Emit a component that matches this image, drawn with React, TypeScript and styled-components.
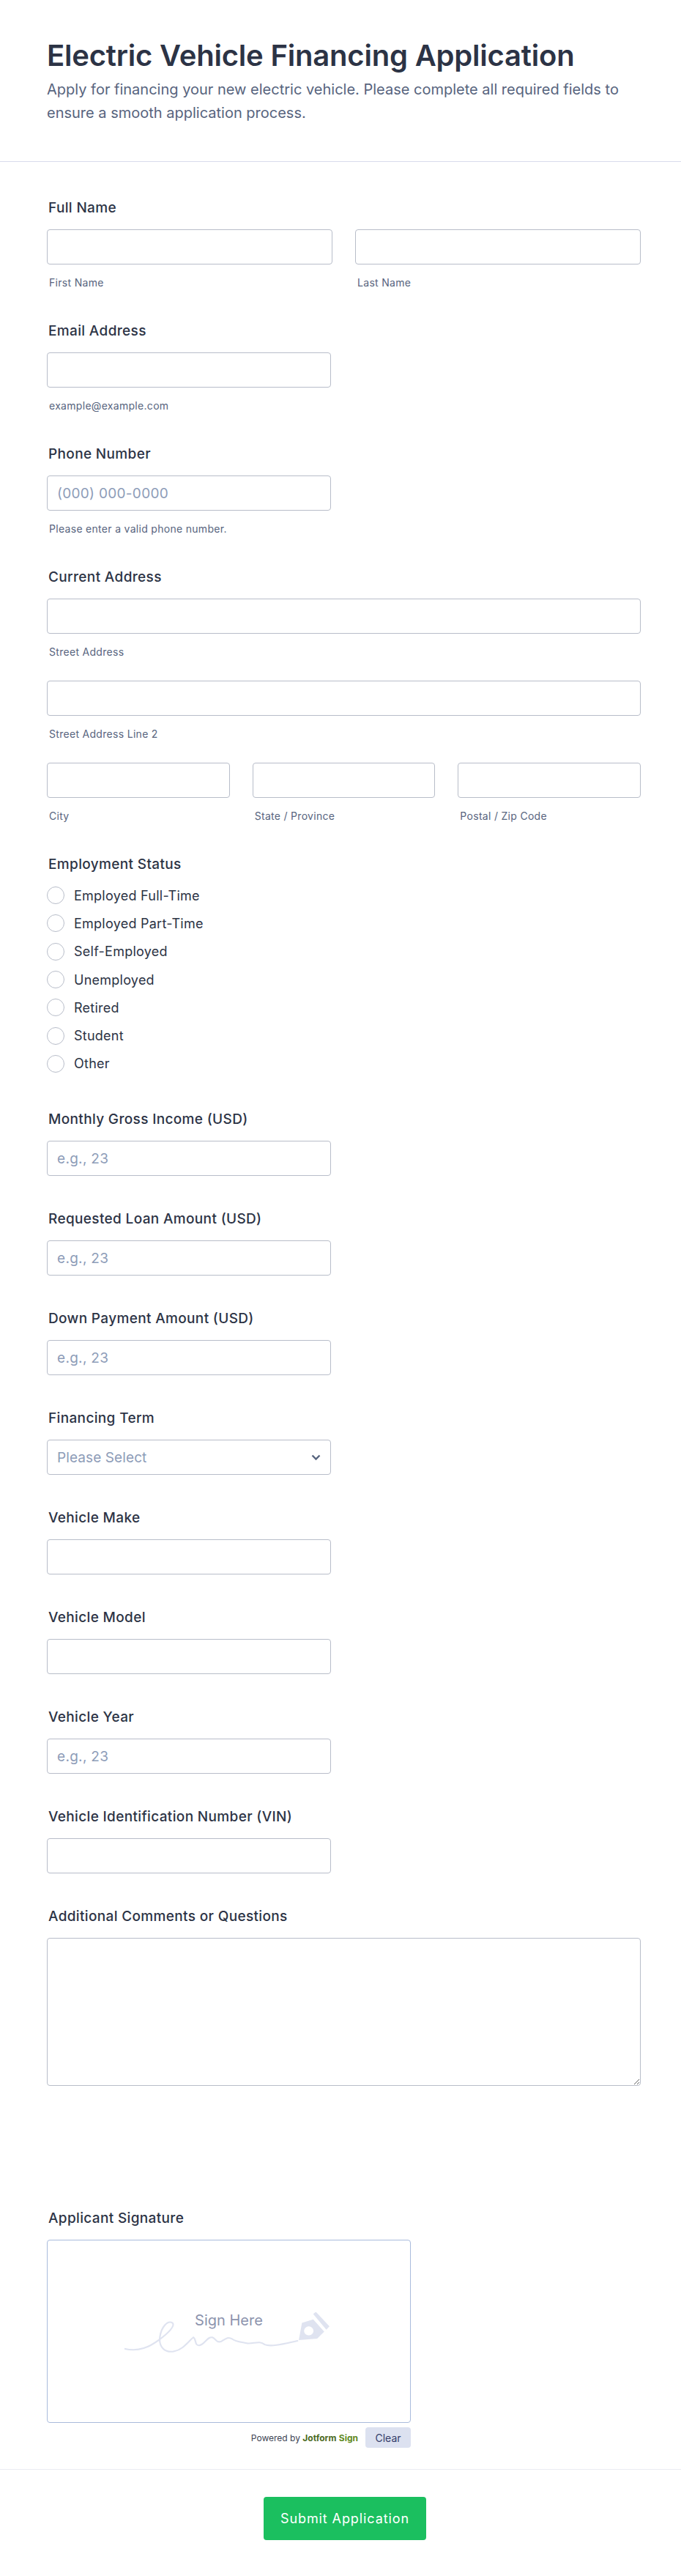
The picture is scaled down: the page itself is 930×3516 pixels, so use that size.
import styled, { createGlobalStyle } from "styled-components";

const GlobalStyle = createGlobalStyle`
  * { box-sizing: border-box; }
  body {
    margin: 0;
    background: #fff;
    font-family: Inter, "Liberation Sans", sans-serif;
    color: #2c3345;
  }
`;

const Page = styled.form`
  width: 930px;
  height: 3516px;
`;

const Header = styled.header`
  padding: 52px 64px 0;
  height: 221px;
  border-bottom: 1px solid #d8dcec;
`;

const Title = styled.h1`
  margin: 0;
  font-size: 40px;
  line-height: 48px;
  font-weight: 600;
  letter-spacing: -0.2px;
  color: #2c3345;
`;

const Subtitle = styled.p`
  margin: 6px 0 0;
  font-size: 20px;
  line-height: 32px;
  color: #57647e;
`;

const Fields = styled.div`
  padding: 51px 55px 0 64px;
`;

const Field = styled.div<{ $gap?: number }>`
  margin-bottom: ${(p) => p.$gap ?? 47}px;
`;

const Label = styled.label`
  display: block;
  padding-left: 2px;
  margin-bottom: 17px;
  font-size: 19px;
  line-height: 24px;
  font-weight: 500;
  letter-spacing: 0.35px;
  color: #2c3345;
`;

const Row = styled.div<{ $cols: number; $gap: number }>`
  display: grid;
  grid-template-columns: repeat(${(p) => p.$cols}, 1fr);
  column-gap: ${(p) => p.$gap}px;
`;

const Input = styled.input<{ $short?: boolean }>`
  display: block;
  width: ${(p) => (p.$short ? "388px" : "100%")};
  height: 48px;
  padding: 0 13px;
  border: 1px solid #b8bdc9;
  border-radius: 4px;
  background: #fff;
  font: 400 19px Inter, sans-serif;
  letter-spacing: 0.3px;
  color: #2c3345;
  outline: none;
  &::placeholder {
    color: #8d9cb8;
    opacity: 1;
  }
`;

const SelectWrap = styled.div`
  position: relative;
  width: 388px;
`;

const Select = styled.select`
  display: block;
  width: 100%;
  height: 48px;
  padding: 0 13px;
  border: 1px solid #b8bdc9;
  border-radius: 4px;
  background: #fff;
  font: 400 19px Inter, sans-serif;
  letter-spacing: 0.1px;
  color: #8d9cb8;
  appearance: none;
  outline: none;
`;

const Chevron = styled.svg`
  position: absolute;
  top: 20px;
  right: 14px;
  width: 13px;
  height: 9px;
`;

const Sub = styled.div<{ $bottom?: number }>`
  margin-top: 17px;
  margin-bottom: ${(p) => p.$bottom ?? 0}px;
  padding-left: 3px;
  font-size: 14px;
  line-height: 15px;
  letter-spacing: 0.3px;
  color: #57647e;
`;

const Radios = styled.div`
  display: flex;
  flex-direction: column;
  margin-top: -6px;
`;

const RadioRow = styled.label`
  display: flex;
  align-items: center;
  gap: 13px;
  height: 38.3px;
  font-size: 18px;
  letter-spacing: 0.25px;
  color: #2c3345;
`;

const RadioDot = styled.input`
  appearance: none;
  width: 24px;
  height: 24px;
  margin: 0;
  border: 1px solid #b8bdc9;
  border-radius: 50%;
  background: #fff;
`;

const Comments = styled.textarea`
  display: block;
  width: 100%;
  height: 202px;
  border: 1px solid #b8bdc9;
  border-radius: 4px;
  background: #fff;
  outline: none;
`;

const SignatureWrap = styled.div`
  width: 497px;
`;

const SignatureBox = styled.div`
  position: relative;
  height: 250px;
  border: 1px solid #a9bbdc;
  border-radius: 4px;
  background: #fff;
`;

const SignHere = styled.span`
  position: absolute;
  top: 96px;
  left: 0;
  right: 0;
  text-align: center;
  font-size: 20px;
  line-height: 26px;
  color: #8d94ae;
`;

const Scribble = styled.svg`
  position: absolute;
  top: 98px;
  left: 105px;
  width: 281px;
  height: 56px;
`;

const SignatureFooter = styled.div`
  display: flex;
  justify-content: flex-end;
  align-items: center;
  gap: 10px;
  margin-top: 6px;
`;

const Powered = styled.span`
  font-size: 12px;
  color: #3d4454;
  b {
    font-weight: 700;
    color: #4c6b1f;
  }
  em {
    font-style: normal;
    font-weight: 700;
    color: #5f8a22;
  }
`;

const ClearButton = styled.button`
  width: 62px;
  height: 28px;
  padding: 0;
  border: none;
  border-radius: 4px;
  background: #dce1f0;
  font: 400 14px Inter, sans-serif;
  color: #343c6a;
`;

const Footer = styled.footer`
  display: flex;
  justify-content: center;
  margin-top: 29px;
  padding: 37px 0 0 12px;
  border-top: 1px solid #eaebf2;
`;

const Submit = styled.button`
  width: 222px;
  height: 59px;
  border: none;
  border-radius: 4px;
  background: #1bbf5f;
  font: 400 18px Inter, sans-serif;
  letter-spacing: 0.9px;
  color: #fff;
`;

const employment = [
  "Employed Full-Time",
  "Employed Part-Time",
  "Self-Employed",
  "Unemployed",
  "Retired",
  "Student",
  "Other",
];

const App = () => {
  return (
    <Page>
      <GlobalStyle />
      <Header>
        <Title>Electric Vehicle Financing Application</Title>
        <Subtitle>
          Apply for financing your new electric vehicle. Please complete all required fields to ensure a smooth
          application process.
        </Subtitle>
      </Header>
      <Fields>
        <Field>
          <Label>Full Name</Label>
          <Row $cols={2} $gap={31}>
            <div>
              <Input />
              <Sub>First Name</Sub>
            </div>
            <div>
              <Input />
              <Sub>Last Name</Sub>
            </div>
          </Row>
        </Field>
        <Field>
          <Label>Email Address</Label>
          <Input $short />
          <Sub>example@example.com</Sub>
        </Field>
        <Field>
          <Label>Phone Number</Label>
          <Input $short placeholder="(000) 000-0000" />
          <Sub>Please enter a valid phone number.</Sub>
        </Field>
        <Field>
          <Label>Current Address</Label>
          <Input />
          <Sub $bottom={32}>Street Address</Sub>
          <Input />
          <Sub $bottom={32}>Street Address Line 2</Sub>
          <Row $cols={3} $gap={31}>
            <div>
              <Input />
              <Sub>City</Sub>
            </div>
            <div>
              <Input />
              <Sub>State / Province</Sub>
            </div>
            <div>
              <Input />
              <Sub>Postal / Zip Code</Sub>
            </div>
          </Row>
        </Field>
        <Field $gap={45}>
          <Label>Employment Status</Label>
          <Radios>
            {employment.map((item) => (
              <RadioRow key={item}>
                <RadioDot type="radio" name="employment" />
                {item}
              </RadioRow>
            ))}
          </Radios>
        </Field>
        <Field>
          <Label>Monthly Gross Income (USD)</Label>
          <Input $short placeholder="e.g., 23" />
        </Field>
        <Field>
          <Label>Requested Loan Amount (USD)</Label>
          <Input $short placeholder="e.g., 23" />
        </Field>
        <Field>
          <Label>Down Payment Amount (USD)</Label>
          <Input $short placeholder="e.g., 23" />
        </Field>
        <Field>
          <Label>Financing Term</Label>
          <SelectWrap>
            <Select defaultValue="">
              <option value="">Please Select</option>
            </Select>
            <Chevron viewBox="0 0 13 9">
              <path d="M1.5 1.5 6.5 6.5 11.5 1.5" fill="none" stroke="#57647e" strokeWidth="2.4" />
            </Chevron>
          </SelectWrap>
        </Field>
        <Field>
          <Label>Vehicle Make</Label>
          <Input $short />
        </Field>
        <Field>
          <Label>Vehicle Model</Label>
          <Input $short />
        </Field>
        <Field>
          <Label>Vehicle Year</Label>
          <Input $short placeholder="e.g., 23" />
        </Field>
        <Field>
          <Label>Vehicle Identification Number (VIN)</Label>
          <Input $short />
        </Field>
        <Field $gap={169}>
          <Label>Additional Comments or Questions</Label>
          <Comments />
        </Field>
        <SignatureWrap>
          <Label>Applicant Signature</Label>
          <SignatureBox>
            <Scribble viewBox="365 465 785 165" preserveAspectRatio="none">
              <path
                d="M367 612C420 625 460 605 498 575C530 550 560 520 548 508C530 495 505 525 500 565C495 605 520 630 555 622C590 615 610 580 628 566C640 575 632 600 650 598C672 595 680 562 700 566C715 572 715 590 735 582C750 572 760 562 775 572C790 585 815 585 835 590C860 592 880 578 900 595C925 606 980 590 1025 580"
                fill="none"
                stroke="#dfe3f0"
                strokeWidth="6"
                strokeLinecap="round"
              />
              <path
                fillRule="evenodd"
                d="M1030 577 1042 508 1085 494 1127 543 1100 571ZM1068 522a18 18 0 1 0 .1 0Z"
                fill="#dfe3f0"
              />
              <path d="M1085 472 1095 463 1147 522 1135 535Z" fill="#dfe3f0" />
            </Scribble>
            <SignHere>Sign Here</SignHere>
          </SignatureBox>
          <SignatureFooter>
            <Powered>
              Powered by <b>Jotform</b> <em>Sign</em>
            </Powered>
            <ClearButton type="button">Clear</ClearButton>
          </SignatureFooter>
        </SignatureWrap>
      </Fields>
      <Footer>
        <Submit type="button">Submit Application</Submit>
      </Footer>
    </Page>
  );
};

export default App;
